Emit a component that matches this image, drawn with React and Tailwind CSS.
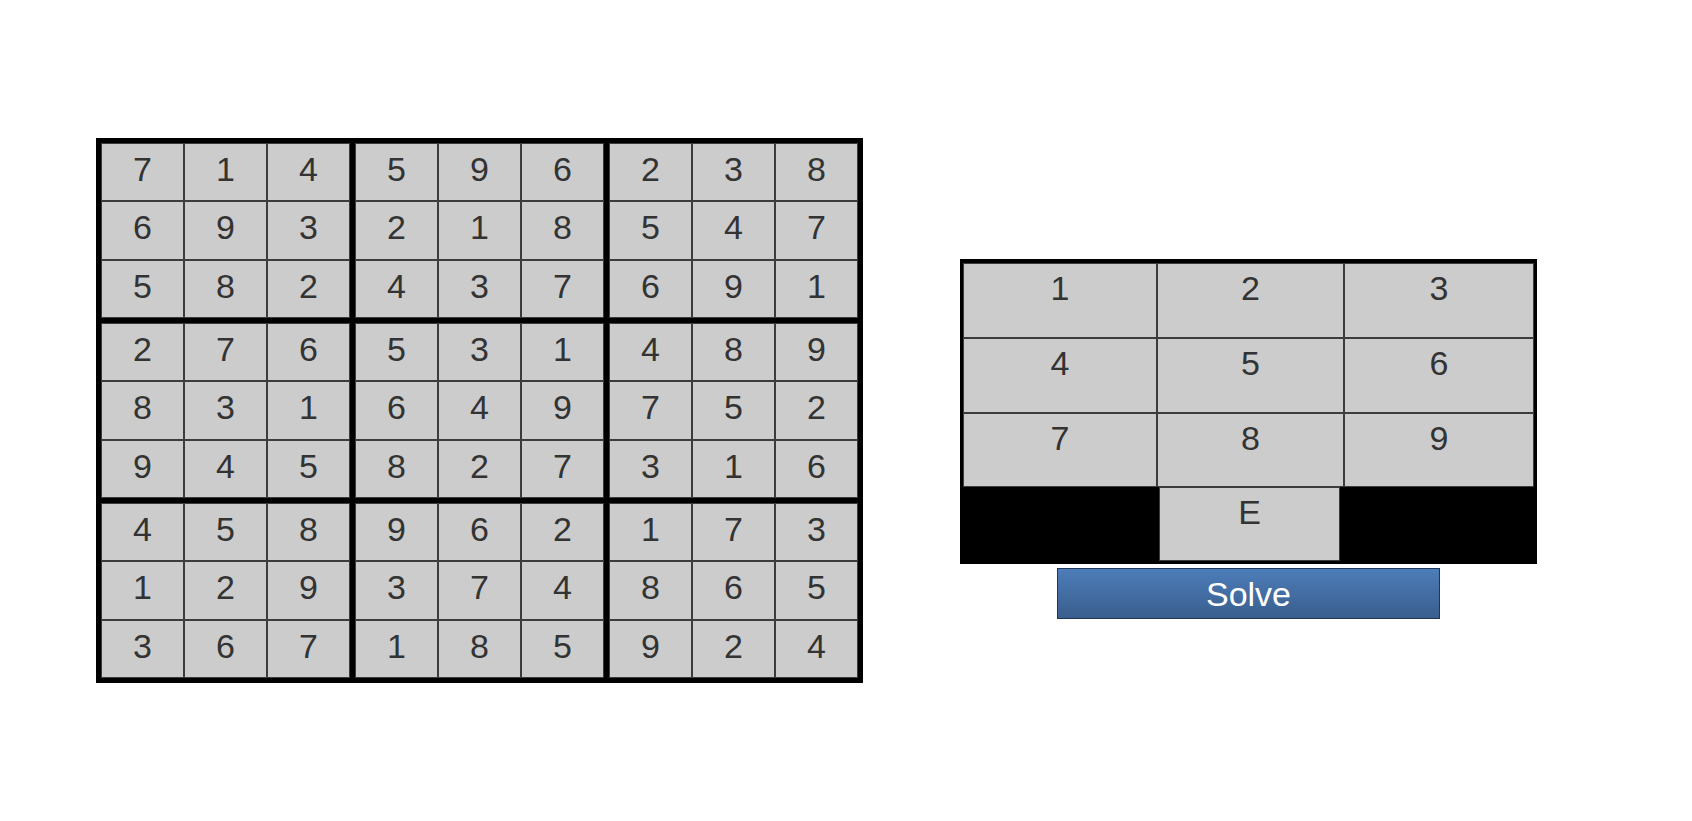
import React from 'react';

const board = [
  [7, 1, 4, 5, 9, 6, 2, 3, 8],
  [6, 9, 3, 2, 1, 8, 5, 4, 7],
  [5, 8, 2, 4, 3, 7, 6, 9, 1],
  [2, 7, 6, 5, 3, 1, 4, 8, 9],
  [8, 3, 1, 6, 4, 9, 7, 5, 2],
  [9, 4, 5, 8, 2, 7, 3, 1, 6],
  [4, 5, 8, 9, 6, 2, 1, 7, 3],
  [1, 2, 9, 3, 7, 4, 8, 6, 5],
  [3, 6, 7, 1, 8, 5, 9, 2, 4],
];

function Box({ br, bc }) {
  const cells = [];
  for (let r = 0; r < 3; r++) {
    for (let c = 0; c < 3; c++) {
      cells.push(board[br * 3 + r][bc * 3 + c]);
    }
  }
  return (
    <div className="grid grid-cols-3 grid-rows-3 h-[175px]">
      {cells.map((n, i) => (
        <div
          key={i}
          className="border border-[#3c3c3c] bg-[#cccccc] text-center text-[34px] leading-[38px] pt-[6px] text-[#333]"
        >
          {n}
        </div>
      ))}
    </div>
  );
}

function Key({ label, className = '' }) {
  return (
    <div
      className={`border border-[#3c3c3c] bg-[#cccccc] text-center text-[34px] leading-[38px] pt-[5px] text-[#333] ${className}`}
    >
      {label}
    </div>
  );
}

export default function App() {
  return (
    <div className="min-h-screen bg-white flex items-center pl-[96px] font-['Liberation_Sans',Arial,sans-serif]">
      <div className="flex items-start">
        {/* Sudoku board */}
        <div className="w-[767px] bg-black p-[5px] grid grid-cols-3 gap-[5px]">
          {[0, 1, 2].map((br) =>
            [0, 1, 2].map((bc) => <Box key={`${br}-${bc}`} br={br} bc={bc} />)
          )}
        </div>

        {/* Keypad + solve */}
        <div className="ml-[97px] mt-[121px] flex flex-col items-center">
          <div className="w-[577px] bg-black border-x-[3px] border-t-[4px] border-b-[3px] border-black">
            <div className="grid grid-cols-[194px_187px_1fr] grid-rows-[75px_75px_74px]">
              {[1, 2, 3, 4, 5, 6, 7, 8, 9].map((n) => (
                <Key key={n} label={n} />
              ))}
            </div>
            <div className="flex justify-center pl-[2px]">
              <Key label="E" className="w-[181px] h-[74px]" />
            </div>
          </div>
          <button className="mt-[4px] w-[383px] h-[51px] border border-[#1f3656] bg-gradient-to-b from-[#4d7db9] to-[#3a5e8e] text-white text-[34px] leading-none">
            Solve
          </button>
        </div>
      </div>
    </div>
  );
}
